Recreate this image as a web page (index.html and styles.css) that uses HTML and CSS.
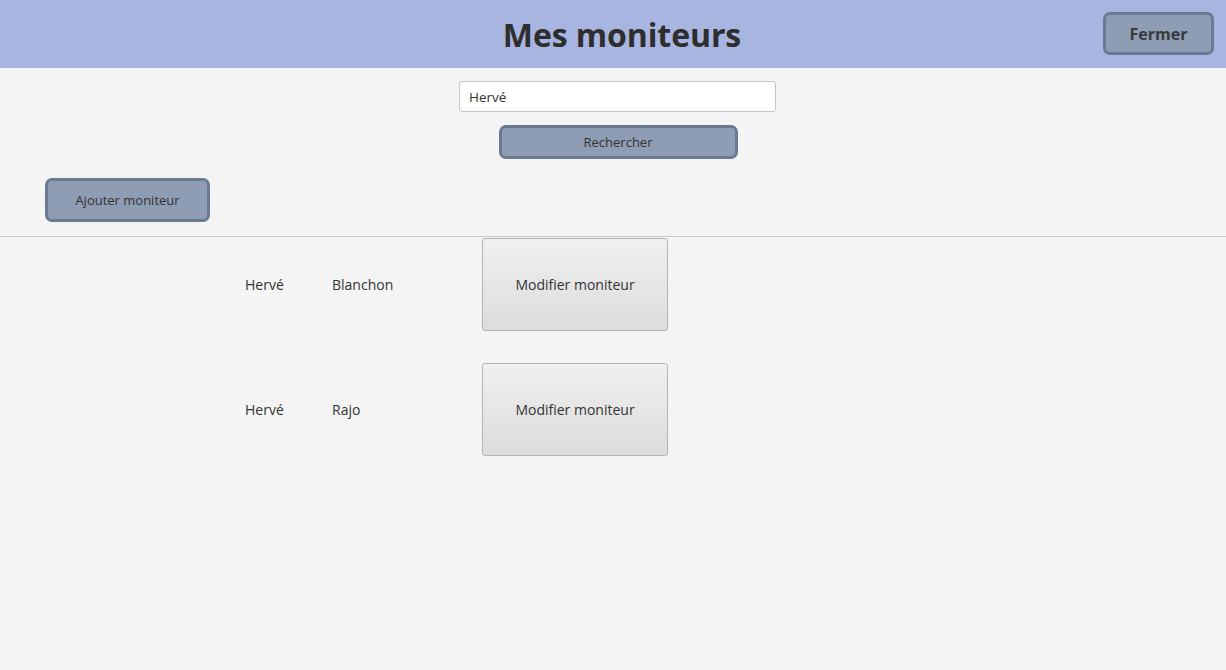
FILE: index.html
```html
<!DOCTYPE html>
<html lang="fr">
<head>
<meta charset="utf-8">
<title>Mes moniteurs</title>
<link rel="stylesheet" href="styles.css">
</head>
<body>
<header class="header">
  <h1 class="title">Mes moniteurs</h1>
  <button class="btn-dark btn-close">Fermer</button>
</header>
<section class="search">
  <input class="search-input" type="text" value="Hervé">
  <button class="btn-dark btn-search">Rechercher</button>
</section>
<div class="actions">
  <button class="btn-dark btn-add">Ajouter moniteur</button>
</div>
<div class="list">
  <div class="row">
    <span class="first">Hervé</span>
    <span class="last">Blanchon</span>
    <button class="btn-edit">Modifier moniteur</button>
  </div>
  <div class="row">
    <span class="first">Hervé</span>
    <span class="last">Rajo</span>
    <button class="btn-edit">Modifier moniteur</button>
  </div>
</div>
</body>
</html>
```
FILE: styles.css
```css
* { box-sizing: border-box; }
html, body { margin: 0; padding: 0; }
body {
  width: 1226px;
  height: 670px;
  background: #f4f4f4;
  font-family: "Open Sans", "Noto Sans", sans-serif;
  color: #333;
  overflow: hidden;
}
.header {
  height: 68px;
  background: #a9b5e1;
  display: flex;
  align-items: center;
  justify-content: center;
  padding-left: 18px;
  position: relative;
}
.title {
  margin: 0;
  font-size: 32px;
  font-weight: 700;
  color: #2e2e2e;
  letter-spacing: -0.1px;
  padding-top: 1px;
}
.btn-dark {
  font-family: inherit;
  background: #8e9cb4;
  border: 3px solid #6a7a93;
  border-radius: 7px;
  color: #333;
  padding: 0;
  cursor: pointer;
}
.btn-close {
  position: absolute;
  left: 1103px;
  top: 12px;
  width: 111px;
  height: 43px;
  font-size: 16px;
  font-weight: 700;
  color: #3a3a3a;
}
.search {
  display: flex;
  flex-direction: column;
  align-items: center;
  padding-top: 13px;
  padding-left: 9px;
  gap: 13px;
}
.search-input {
  width: 317px;
  height: 31px;
  border: 1px solid #c6c6c6;
  border-radius: 3px;
  background: #fff;
  font-family: inherit;
  font-size: 13.5px;
  color: #333;
  padding: 0 9px;
  outline: none;
}
.btn-search {
  width: 239px;
  height: 34px;
  font-size: 13px;
  margin-left: 1px;
}
.actions {
  padding: 19px 0 0 45px;
  height: 70px;
}
.btn-add {
  width: 165px;
  height: 44px;
  font-size: 13px;
}
.list {
  margin-top: 7px;
  border-top: 1px solid #c9c9c9;
  padding-top: 1px;
  display: flex;
  flex-direction: column;
  gap: 32px;
}
.row {
  display: flex;
  align-items: center;
  height: 93px;
  font-size: 14px;
}
.first { margin-left: 245px; width: 87px; }
.last { width: 150px; }
.btn-edit {
  width: 186px;
  height: 93px;
  font-family: inherit;
  font-size: 14px;
  color: #333;
  border: 1px solid #b3b3b3;
  border-radius: 3px;
  background: linear-gradient(#f0f0f0, #dcdcdc);
  padding: 0;
}
```
